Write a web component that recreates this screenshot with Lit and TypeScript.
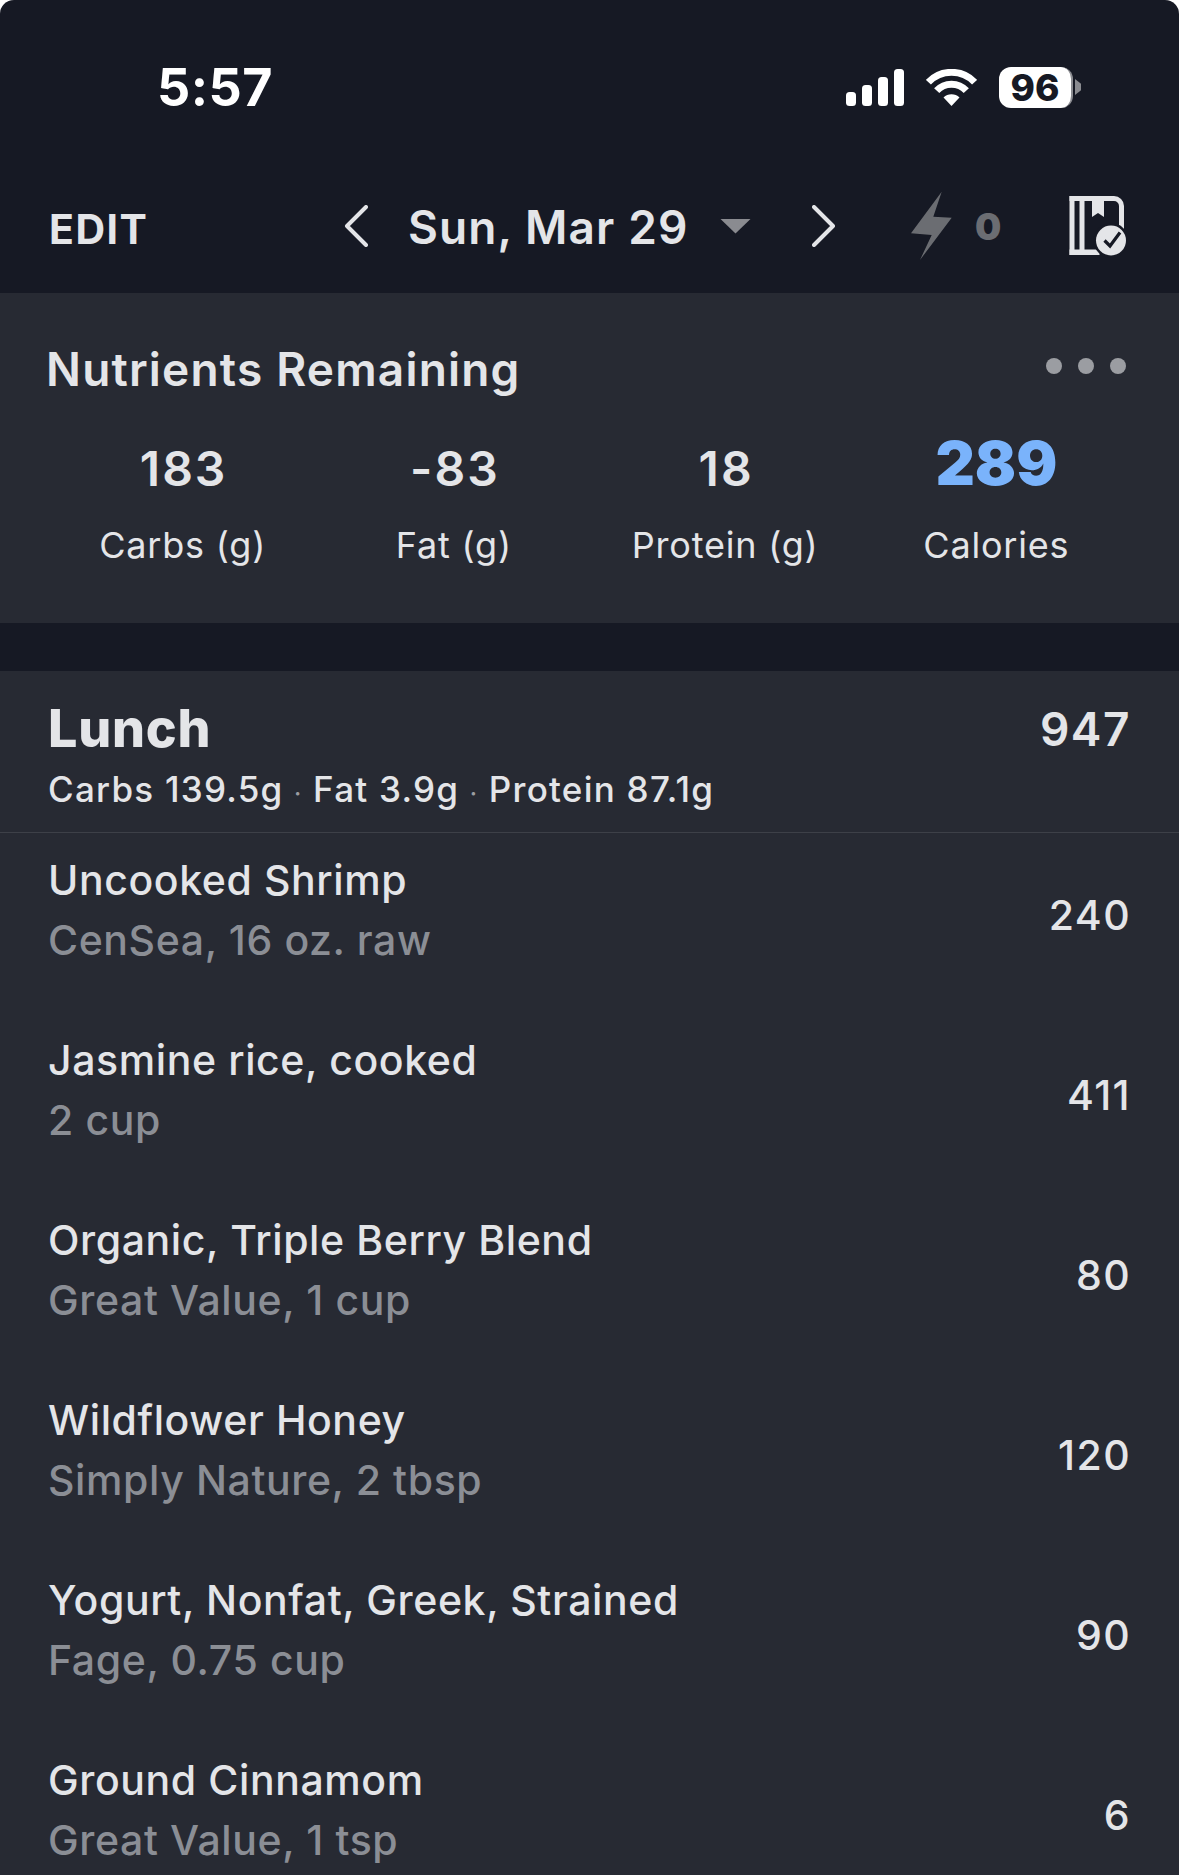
import { LitElement, html, css } from "lit";
import { customElement } from "lit/decorators.js";

const items = [
  ["Uncooked Shrimp", "CenSea, 16 oz. raw", "240"],
  ["Jasmine rice, cooked", "2 cup", "411"],
  ["Organic, Triple Berry Blend", "Great Value, 1 cup", "80"],
  ["Wildflower Honey", "Simply Nature, 2 tbsp", "120"],
  ["Yogurt, Nonfat, Greek, Strained", "Fage, 0.75 cup", "90"],
  ["Ground Cinnamom", "Great Value, 1 tsp", "6"],
];
const stats = [
  ["183", "Carbs (g)"],
  ["-83", "Fat (g)"],
  ["18", "Protein (g)"],
];

@customElement("app-root")
export class AppRoot extends LitElement {
  static styles = css`
    :host {
      display: block;
      height: 1875px;
      overflow: hidden;
      background: #ffffff;
      font-family: Inter, "Liberation Sans", sans-serif;
      color: #e4e5e8;
    }
    .screen {
      height: 1875px;
      overflow: hidden;
      border-radius: 14px 14px 0 0;
      background: #161924;
      display: flex;
      flex-direction: column;
    }
    .status {
      height: 174px;
      flex: none;
      display: flex;
      align-items: center;
      padding: 0 98px 0 157px;
    }
    .time {
      font-size: 52px;
      font-weight: 700;
      letter-spacing: 0.5px;
      color: #fff;
      line-height: 56px;
      padding-top: 2px;
      flex: 1;
    }
    .signal { display: block; width: 58px; height: 37px; margin-right: 22px; }
    .wifi { display: block; width: 51px; height: 37px; margin-right: 22px; }
    .battery {
      width: 74px;
      height: 41px;
      box-sizing: border-box;
      background: #fff;
      border-right: 2px solid #8a8b90;
      border-radius: 12px;
      color: #161924;
      font-size: 37px;
      font-weight: 800;
      line-height: 42px;
      text-align: center;
    }
    .nub {
      width: 6px;
      height: 16px;
      margin-left: 2px;
      background: #8a8b90;
      clip-path: polygon(0 0, 100% 30%, 100% 70%, 0 100%);
    }
    .nav {
      flex: none;
      height: 104px;
      padding: 0 0 15px 49px;
      display: grid;
      grid-template-columns: 295px 64px 312px 92px 99px 64px 92px 60px;
      align-items: center;
    }
    .edit { font-size: 41px; font-weight: 700; letter-spacing: 1.5px; line-height: 46px; padding-top: 6px; }
    .date { font-size: 46px; font-weight: 600; letter-spacing: 1.1px; line-height: 56px; padding-top: 2px; white-space: nowrap; }
    .tri {
      width: 31px;
      height: 15px;
      background: #8a8b90;
      clip-path: polygon(0 0, 100% 0, 50% 100%);
    }
    .zero { font-size: 37px; font-weight: 900; color: #6b6d72; line-height: 40px; padding-top: 2px; }
    .nav svg { display: block; }
    .panel { background: #272a33; }
    .summary {
      flex: none;
      height: 330px;
      box-sizing: border-box;
      padding: 49px 47px 0;
    }
    .sum-head { display: flex; justify-content: space-between; }
    .sum-title { font-size: 46px; font-weight: 600; letter-spacing: 1.2px; line-height: 56px; margin: -1px 0 0 -1px; }
    .dots { display: flex; gap: 16px; padding: 16px 6px 0 0; }
    .dot { width: 16px; height: 16px; border-radius: 50%; background: #9b9da2; }
    .grid {
      display: grid;
      grid-template-columns: repeat(4, 1fr);
      text-align: center;
      margin-top: 34px;
    }
    .num { font-size: 48px; font-weight: 600; letter-spacing: 2px; padding-left: 2px; line-height: 76px; height: 76px; }
    .num.cal { font-size: 61px; font-weight: 900; letter-spacing: 0; padding-left: 0; color: #7ab3fb; line-height: 64px; }
    .lab { font-size: 36px; font-weight: 400; letter-spacing: 0.8px; line-height: 44px; margin-top: 16px; }
    .gap { flex: none; height: 48px; }
    .meal { flex: 1; min-height: 0; }
    .meal-head {
      height: 162px;
      box-sizing: border-box;
      border-bottom: 1px solid #3d4048;
      padding: 26px 48px 0;
    }
    .meal-top { display: flex; justify-content: space-between; align-items: center; }
    .meal-name { font-size: 52px; font-weight: 800; letter-spacing: 0.8px; line-height: 64px; }
    .meal-cal { font-size: 46px; font-weight: 600; letter-spacing: 1.5px; line-height: 64px; }
    .macros { font-size: 35px; font-weight: 500; letter-spacing: 1.25px; line-height: 44px; margin-top: 6px; white-space: nowrap; }
    .sep { font-size: 24px; color: #9b9da2; margin: 0 10.5px; }
    .list { display: flex; flex-direction: column; gap: 16px; padding: 0 48px; }
    .row { height: 164px; flex: none; display: flex; align-items: center; justify-content: space-between; }
    .name, .sub, .kcal { font-size: 41px; font-weight: 500; letter-spacing: 0.6px; line-height: 50px; }
    .name { margin-top: -10px; }
    .sub { color: #8b8e95; margin-top: 10px; }
    .kcal { letter-spacing: 1.4px; }
  `;

  render() {
    return html`<div class="screen">
      <div class="status">
        <div class="time">5:57</div>
        <svg class="signal" viewBox="0 0 58 37" fill="#fff">
          <rect x="0" y="23" width="10" height="14" rx="3.5"></rect>
          <rect x="16" y="16" width="10" height="21" rx="3.5"></rect>
          <rect x="32" y="8" width="10" height="29" rx="3.5"></rect>
          <rect x="48" y="0" width="10" height="37" rx="3.5"></rect>
        </svg>
        <svg class="wifi" viewBox="0 0 51 37">
          <path d="M2.4 13.2a32 32 0 0 1 46.2 0" fill="none" stroke="#fff" stroke-width="7"></path>
          <path d="M10.7 21.7a20 20 0 0 1 29.6 0" fill="none" stroke="#fff" stroke-width="7"></path>
          <path d="M25.5 37l-8-8.6a11.5 11.5 0 0 1 16 0z" fill="#fff"></path>
        </svg>
        <div class="battery">96</div>
        <div class="nub"></div>
      </div>
      <div class="nav">
        <div class="edit">EDIT</div>
        <svg width="24" height="42" viewBox="0 0 24 42"><path d="M22 2L3 21l19 19" fill="none" stroke="#e4e5e8" stroke-width="4" stroke-linecap="round" stroke-linejoin="round"></path></svg>
        <div class="date">Sun, Mar 29</div>
        <div class="tri"></div>
        <svg width="24" height="42" viewBox="0 0 24 42"><path d="M2 2l19 19L2 40" fill="none" stroke="#e4e5e8" stroke-width="4" stroke-linecap="round" stroke-linejoin="round"></path></svg>
        <svg width="42" height="70" viewBox="11 6 42 70"><path d="M41.7 6.7L11 48.3l20.7 1.7L20 75l31.7-42.3-18.4-1z" fill="#6b6d72"></path></svg>
        <div class="zero">0</div>
        <svg width="60" height="64" viewBox="16 9 60 64">
          <rect x="18.5" y="11" width="5" height="59" fill="#e4e5e8"></rect>
          <rect x="28.5" y="11" width="5" height="59" fill="#e4e5e8"></rect>
          <path d="M18.5 13.5H63a7.5 7.5 0 0 1 7.5 7.5V46" fill="none" stroke="#e4e5e8" stroke-width="5"></path>
          <rect x="18.5" y="64.5" width="30" height="5.5" fill="#e4e5e8"></rect>
          <path d="M41 11h12v21l-6-4-6 4z" fill="#e4e5e8"></path>
          <circle cx="60" cy="55.5" r="17.5" fill="#161924"></circle>
          <circle cx="60" cy="55.5" r="15" fill="#e4e5e8"></circle>
          <path d="M53.5 55.5l5.5 5.5 10-13.5" fill="none" stroke="#161924" stroke-width="3.2"></path>
        </svg>
      </div>
      <section class="panel summary">
        <div class="sum-head">
          <div class="sum-title">Nutrients Remaining</div>
          <div class="dots"><div class="dot"></div><div class="dot"></div><div class="dot"></div></div>
        </div>
        <div class="grid">
          ${stats.map(([n, l]) => html`<div><div class="num">${n}</div><div class="lab">${l}</div></div>`)}
          <div><div class="num cal">289</div><div class="lab">Calories</div></div>
        </div>
      </section>
      <div class="gap"></div>
      <section class="panel meal">
        <div class="meal-head">
          <div class="meal-top"><div class="meal-name">Lunch</div><div class="meal-cal">947</div></div>
          <div class="macros">Carbs 139.5g<span class="sep">·</span>Fat 3.9g<span class="sep">·</span>Protein 87.1g</div>
        </div>
        <div class="list">
          ${items.map(
            ([a, b, c]) => html`<div class="row">
              <div><div class="name">${a}</div><div class="sub">${b}</div></div>
              <div class="kcal">${c}</div>
            </div>`
          )}
        </div>
      </section>
    </div>`;
  }
}
